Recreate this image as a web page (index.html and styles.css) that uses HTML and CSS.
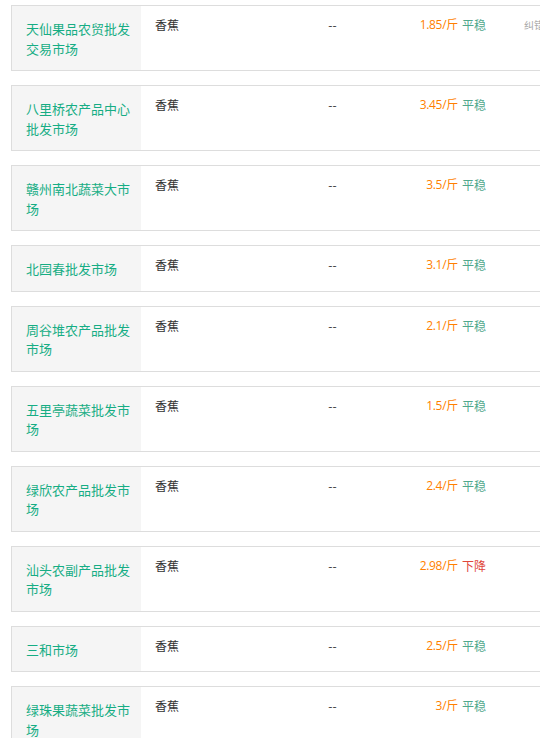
FILE: index.html
```html
<!DOCTYPE html>
<html lang="zh-CN">
<head>
<meta charset="utf-8">
<title>香蕉批发价格</title>
<link rel="stylesheet" href="styles.css">
</head>
<body>
<div class="list">
  <div class="row">
    <div class="market">天仙果品农贸批发交易市场</div>
    <div class="product">香蕉</div>
    <div class="spec">--</div>
    <div class="price"><span class="num">1.85/斤</span><span class="trend flat">平稳</span></div>
    <div class="fix">纠错</div>
  </div>
  <div class="row">
    <div class="market">八里桥农产品中心批发市场</div>
    <div class="product">香蕉</div>
    <div class="spec">--</div>
    <div class="price"><span class="num">3.45/斤</span><span class="trend flat">平稳</span></div>
    <div class="fix"></div>
  </div>
  <div class="row">
    <div class="market">赣州南北蔬菜大市场</div>
    <div class="product">香蕉</div>
    <div class="spec">--</div>
    <div class="price"><span class="num">3.5/斤</span><span class="trend flat">平稳</span></div>
    <div class="fix"></div>
  </div>
  <div class="row">
    <div class="market">北园春批发市场</div>
    <div class="product">香蕉</div>
    <div class="spec">--</div>
    <div class="price"><span class="num">3.1/斤</span><span class="trend flat">平稳</span></div>
    <div class="fix"></div>
  </div>
  <div class="row">
    <div class="market">周谷堆农产品批发市场</div>
    <div class="product">香蕉</div>
    <div class="spec">--</div>
    <div class="price"><span class="num">2.1/斤</span><span class="trend flat">平稳</span></div>
    <div class="fix"></div>
  </div>
  <div class="row">
    <div class="market">五里亭蔬菜批发市场</div>
    <div class="product">香蕉</div>
    <div class="spec">--</div>
    <div class="price"><span class="num">1.5/斤</span><span class="trend flat">平稳</span></div>
    <div class="fix"></div>
  </div>
  <div class="row">
    <div class="market">绿欣农产品批发市场</div>
    <div class="product">香蕉</div>
    <div class="spec">--</div>
    <div class="price"><span class="num">2.4/斤</span><span class="trend flat">平稳</span></div>
    <div class="fix"></div>
  </div>
  <div class="row">
    <div class="market">汕头农副产品批发市场</div>
    <div class="product">香蕉</div>
    <div class="spec">--</div>
    <div class="price"><span class="num">2.98/斤</span><span class="trend down">下降</span></div>
    <div class="fix"></div>
  </div>
  <div class="row">
    <div class="market">三和市场</div>
    <div class="product">香蕉</div>
    <div class="spec">--</div>
    <div class="price"><span class="num">2.5/斤</span><span class="trend flat">平稳</span></div>
    <div class="fix"></div>
  </div>
  <div class="row">
    <div class="market">绿珠果蔬菜批发市场</div>
    <div class="product">香蕉</div>
    <div class="spec">--</div>
    <div class="price"><span class="num">3/斤</span><span class="trend flat">平稳</span></div>
    <div class="fix"></div>
  </div>
</div>
</body>
</html>
```
FILE: styles.css
```css
html, body {
  margin: 0;
  padding: 0;
  background: #fff;
  overflow: hidden;
}
body {
  font-family: "Noto Sans CJK SC", "Microsoft YaHei", sans-serif;
  color: #333;
}
.list {
  display: flex;
  flex-direction: column;
  gap: 14px;
  padding: 5px 0 0 11px;
  width: 580px;
}
.row {
  display: flex;
  align-items: stretch;
  border: 1px solid #ddd;
}
.market {
  width: 129px;
  box-sizing: border-box;
  flex: none;
  background: #f5f5f5;
  padding: 13px 8px 12px 14px;
  font-size: 13px;
  line-height: 19.5px;
  color: #16ad84;
}
.product {
  width: 150px;
  flex: none;
  box-sizing: border-box;
  padding: 10px 0 0 14px;
  font-size: 12px;
  line-height: 18px;
  color: #333;
}
.spec {
  width: 83px;
  flex: none;
  text-align: center;
  padding-top: 10px;
  font-size: 12px;
  line-height: 18px;
  color: #333;
}
.price {
  width: 112px;
  flex: none;
  display: flex;
  justify-content: flex-end;
  gap: 4px;
  padding-top: 10px;
  font-size: 12px;
  line-height: 18px;
}
.num {
  color: #ff7f00;
  font-family: "Open Sans", "Noto Sans CJK SC", sans-serif;
  letter-spacing: -0.3px;
}
.trend.flat {
  color: #4fa88c;
}
.trend.down {
  color: #e0473b;
}
.fix {
  margin-left: 38px;
  padding-top: 10px;
  font-size: 10px;
  line-height: 18px;
  color: #aaa;
}
```
